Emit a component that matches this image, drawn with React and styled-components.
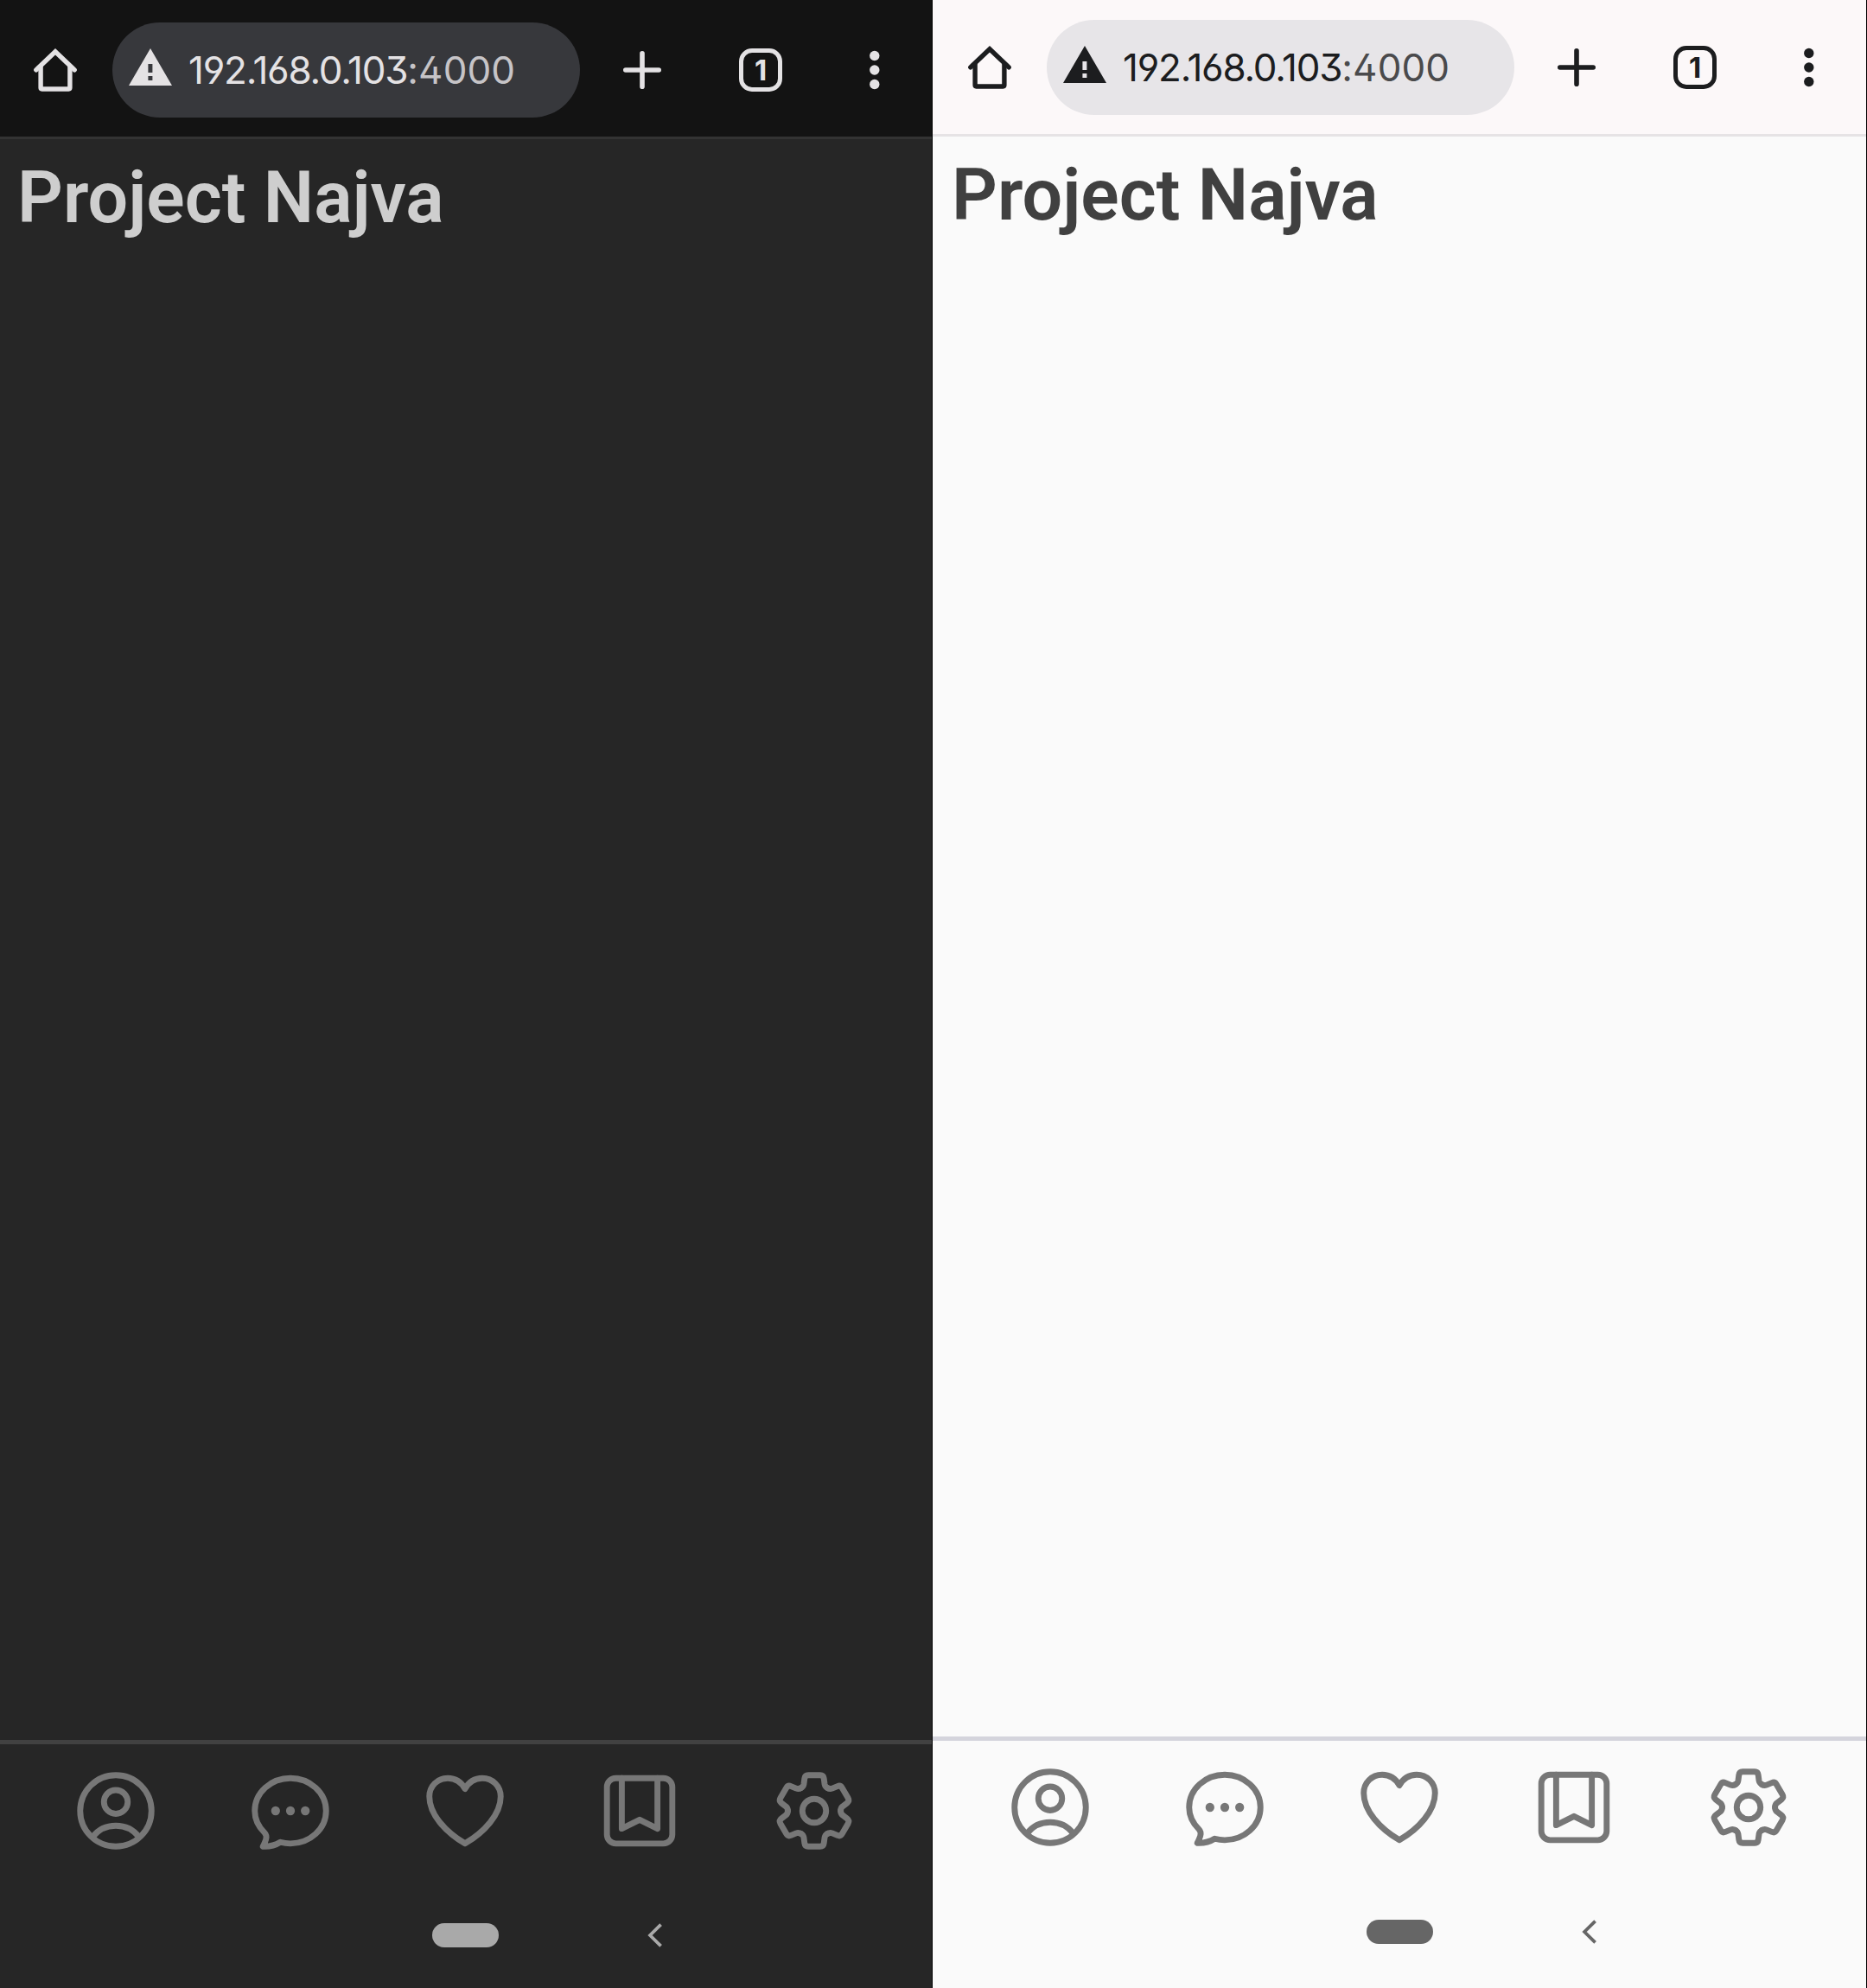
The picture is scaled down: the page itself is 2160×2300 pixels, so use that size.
import React from "react";
import styled, { createGlobalStyle, ThemeProvider } from "styled-components";

const dark = {
  inset: 0,
  width: 1078,
  toolbarHeight: 158,
  toolbarTop: 4,
  bottomHeight: 287,
  toolbar: "#131313",
  toolbarLine: "#333333",
  page: "#262626",
  pill: "#37383c",
  ink: "#e4e2e4",
  port: "#c6c4c7",
  title: "#cecece",
  navLine: "#414141",
  icon: "#777777",
  system: "#a9a9a9",
};

const light = {
  inset: 2,
  width: 1080,
  toolbarHeight: 155,
  toolbarTop: 1,
  bottomHeight: 291,
  toolbar: "#fcf8f9",
  toolbarLine: "#e6e3e5",
  page: "#fafafa",
  pill: "#e7e5e8",
  ink: "#1c1d1f",
  port: "#4a4a4c",
  title: "#404040",
  navLine: "#d4d4dc",
  icon: "#777777",
  system: "#666666",
};

const GlobalStyle = createGlobalStyle`
  * { box-sizing: border-box; }
  body { margin: 0; background: #000; }
`;

const Screens = styled.main`
  display: flex;
  gap: 1px;
  width: 2160px;
  height: 2300px;
  background: #000;
`;

const Phone = styled.section`
  display: flex;
  flex-direction: column;
  flex: none;
  width: ${({ theme }) => theme.width}px;
  height: 2300px;
  overflow: hidden;
  background: ${({ theme }) => theme.page};
`;

const Toolbar = styled.header`
  display: flex;
  align-items: center;
  flex: none;
  height: ${({ theme }) => theme.toolbarHeight + 3}px;
  padding: ${({ theme }) => `${theme.toolbarTop}px 0 0 ${theme.inset + 39}px`};
  border-bottom: 3px solid ${({ theme }) => theme.toolbarLine};
  background: ${({ theme }) => theme.toolbar};
  color: ${({ theme }) => theme.ink};
`;

const Glyph = styled.svg`
  display: block;
  flex: none;
  overflow: visible;
`;

const AddressBar = styled.div`
  display: flex;
  align-items: center;
  width: 541px;
  height: 110px;
  margin: 0 50px 0 41px;
  padding: 0 0 2px 19px;
  border-radius: 55px;
  background: ${({ theme }) => theme.pill};
`;

const Address = styled.span`
  margin: 2px 0 0 19px;
  font: 380 44px/54px Inter, "Liberation Sans", sans-serif;
  font-feature-settings: "ss01";
  letter-spacing: -1.2px;
  white-space: nowrap;
`;

const Port = styled.span`
  color: ${({ theme }) => theme.port};
  letter-spacing: 0.1px;
`;

const TabCount = styled.div`
  display: flex;
  align-items: center;
  justify-content: center;
  width: 50px;
  height: 50px;
  margin: 0 101px 0 90px;
  border: 5.5px solid currentColor;
  border-radius: 15px;
  font: 700 33px/39px Inter, "Liberation Sans", sans-serif;
`;

const Content = styled.div`
  flex: 1;
  padding: 19px 0 0 ${({ theme }) => theme.inset + 20}px;
`;

const Title = styled.h1`
  margin: 0;
  color: ${({ theme }) => theme.title};
  font: 600 82.5px/97px Roboto, "Liberation Sans", sans-serif;
  white-space: nowrap;
`;

const Bottom = styled.footer`
  flex: none;
  height: ${({ theme }) => theme.bottomHeight}px;
`;

const NavBar = styled.nav`
  display: flex;
  gap: 92px;
  padding: 22px 0 22px ${({ theme }) => theme.inset + 79}px;
  border-top: 5px solid ${({ theme }) => theme.navLine};
  color: ${({ theme }) => theme.icon};
`;

const NavGlyph = styled.svg`
  display: block;
  flex: none;
  width: 110px;
  height: 110px;
  fill: none;
  stroke: currentColor;
  stroke-width: 2;
  stroke-linecap: round;
  stroke-linejoin: round;
`;

const SystemBar = styled.div`
  display: flex;
  align-items: center;
  height: 133px;
  padding-left: ${({ theme }) => theme.inset + 500}px;
  color: ${({ theme }) => theme.system};
`;

const HomePill = styled.div`
  width: 77px;
  height: 28px;
  margin-right: 173px;
  border-radius: 14px;
  background: currentColor;
`;

const HomeIcon = () => (
  <Glyph width="50" height="50" viewBox="0 0 50 50" fill="none" stroke="currentColor" strokeWidth="5.4">
    <path d="M8.1 20V45.6q0 1.4 1.4 1.4H40.5q1.4 0 1.4-1.4V20" />
    <path d="M4 23.8 25 3.8 46 23.8" />
    <path d="M2.8 24.9 3.2 24.5M47.2 24.9 46.8 24.5" strokeLinecap="round" />
  </Glyph>
);

const WarningIcon = () => (
  <Glyph width="50" height="50" viewBox="0 0 50 50" fill="currentColor">
    <path fillRule="evenodd" d="M25 1 50 44H0ZM22.4 19v10h5V19ZM22.4 33v5h5v-5Z" />
  </Glyph>
);

const PlusIcon = () => (
  <Glyph width="44" height="44" viewBox="0 0 44 44" stroke="currentColor" strokeWidth="5.6" strokeLinecap="round">
    <path d="M22 2.8V41.2M2.8 22H41.2" />
  </Glyph>
);

const MoreIcon = () => (
  <Glyph width="12" height="44" viewBox="0 0 12 44" fill="currentColor">
    <circle cx="5.8" cy="5.5" r="5.7" />
    <circle cx="5.8" cy="22" r="5.7" />
    <circle cx="5.8" cy="38.5" r="5.7" />
  </Glyph>
);

const BackIcon = () => (
  <Glyph width="17" height="28" viewBox="0 0 17 28" fill="none" stroke="currentColor" strokeWidth="3.8">
    <path d="M14.6 1.6 2.1 14 14.6 26.4" />
  </Glyph>
);

const NavIcon = ({ children }) => <NavGlyph viewBox="-16 -16 32 32">{children}</NavGlyph>;

const ProfileIcon = () => (
  <NavIcon>
    <circle r="12" />
    <circle cy="-3" r="4" />
    <path d="M-7.8 8.8C-6 6.4-3.2 5 0 5S6 6.4 7.8 8.8" />
  </NavIcon>
);

const ChatIcon = () => (
  <NavIcon>
    <path d="M-3.4 10.55C-2.3 10.85-1.2 11 0 11 6.6 11 12 6.1 12 0S6.6-11 0-11-12-6.1-12 0C-12 2.9-10.7 5.4-8.7 7.4-7.9 8.2-8 8.9-8.25 9.7-8.5 10.5-8.9 11.2-9.25 12-6.9 12.1-5.2 11.7-3.4 10.55Z" />
    <g fill="currentColor" stroke="none">
      <circle cx="-5" r="1.5" />
      <circle r="1.5" />
      <circle cx="5" r="1.5" />
    </g>
  </NavIcon>
);

const HeartIcon = () => (
  <NavIcon>
    <path d="M0-7.4C-1.2-9.6-3.2-11-5.8-11-9.3-11-12-8.3-12-4.8-12 1.2-6.5 7.2 0 11 6.5 7.2 12 1.2 12-4.8 12-8.3 9.3-11 5.8-11 3.2-11 1.2-9.6 0-7.4Z" />
  </NavIcon>
);

const BookmarkIcon = () => (
  <NavIcon>
    <rect x="-11" y="-11" width="22" height="22" rx="3" />
    <path d="M-6-11V6L0 3 6 6V-11" />
  </NavIcon>
);

const TEETH = [0, 60, 120, 180, 240, 300];

const SettingsIcon = () => (
  <NavIcon>
    <circle r="4" />
    {TEETH.map((angle) => (
      <path
        key={angle}
        transform={`rotate(${angle})`}
        d="M-4.45-7.7C-3.9-8-3.6-8.45-3.5-9L-3.25-10.9Q-3.1-12-2-12H2Q3.1-12 3.25-10.9L3.5-9C3.6-8.45 3.9-8 4.45-7.7"
      />
    ))}
  </NavIcon>
);

const Screen = ({ theme }) => (
  <ThemeProvider theme={theme}>
    <Phone>
      <Toolbar>
        <HomeIcon />
        <AddressBar>
          <WarningIcon />
          <Address>
            192.168.0.103<Port>:4000</Port>
          </Address>
        </AddressBar>
        <PlusIcon />
        <TabCount>1</TabCount>
        <MoreIcon />
      </Toolbar>
      <Content>
        <Title>Project Najva</Title>
      </Content>
      <Bottom>
        <NavBar>
          <ProfileIcon />
          <ChatIcon />
          <HeartIcon />
          <BookmarkIcon />
          <SettingsIcon />
        </NavBar>
        <SystemBar>
          <HomePill />
          <BackIcon />
        </SystemBar>
      </Bottom>
    </Phone>
  </ThemeProvider>
);

export default function App() {
  return (
    <>
      <GlobalStyle />
      <Screens>
        <Screen theme={dark} />
        <Screen theme={light} />
      </Screens>
    </>
  );
}
